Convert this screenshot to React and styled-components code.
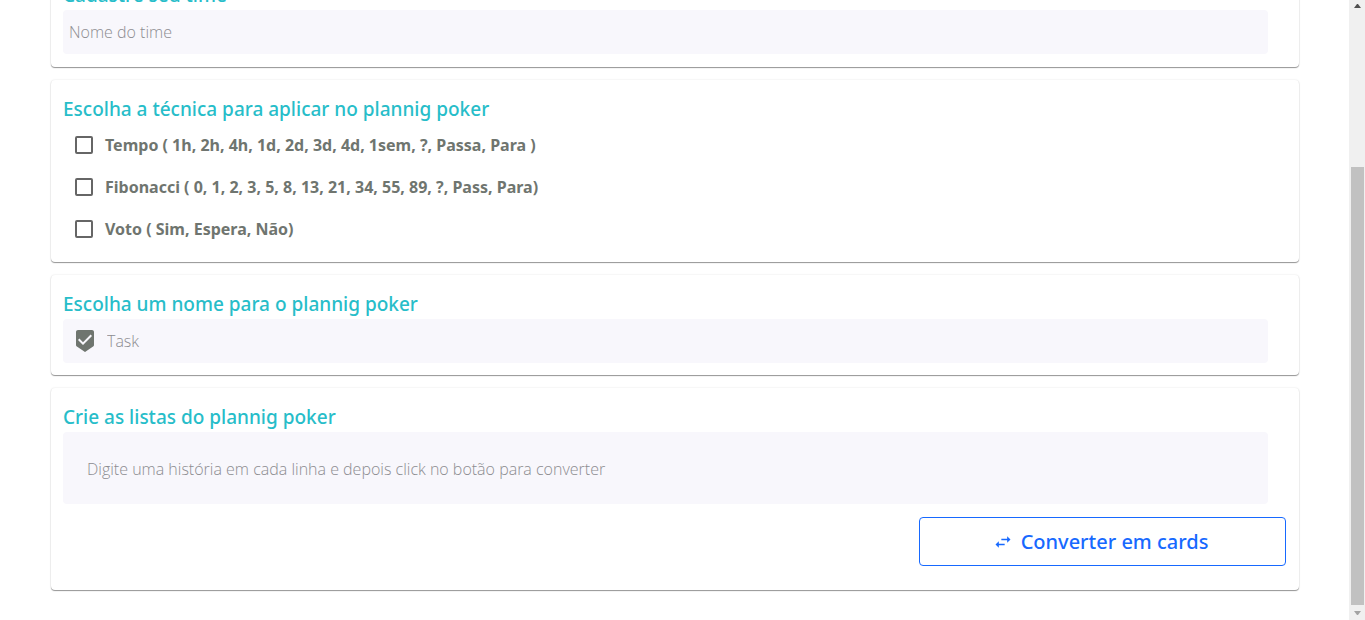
import React from "react";
import styled, { createGlobalStyle } from "styled-components";

const GlobalStyle = createGlobalStyle`
  *, *::before, *::after { box-sizing: border-box; }
  body { margin: 0; background: #fff; font-family: "Noto Sans", "Open Sans", sans-serif; }
`;

const Viewport = styled.div`
  display: flex;
  height: 100vh;
  overflow: hidden;
`;

const Content = styled.main`
  flex: 1;
  min-width: 0;
  display: flex;
  flex-direction: column;
  justify-content: flex-end;
  gap: 13px;
  padding: 0 50px 30px 51px;
`;

const Card = styled.section`
  flex: none;
  display: flex;
  flex-direction: column;
  padding: 14px 13px ${(p) => p.$bottom ?? 12}px 12px;
  border-radius: 4px;
  background: #fff;
  box-shadow: 0 1px 1px rgba(0, 0, 0, 0.4), 0 0 2px rgba(0, 0, 0, 0.12);
`;

const Title = styled.h2`
  margin: 0;
  font-size: 19px;
  font-weight: 500;
  line-height: 30px;
  color: #27bdc9;
`;

const Field = styled.label`
  display: flex;
  align-items: center;
  gap: 10px;
  height: 44px;
  margin-right: 18px;
  padding: 0 ${(p) => (p.$icon ? 10 : 6)}px;
  border-radius: 4px;
  background: #f8f7fc;
  color: #6f756f;
`;

const TextInput = styled.input`
  flex: 1;
  min-width: 0;
  padding: 0;
  border: 0;
  outline: 0;
  background: transparent;
  font: 300 16px/24px "Open Sans", "Noto Sans", sans-serif;
  color: #333;
  &::placeholder { color: #8c8c90; opacity: 1; }
`;

const StoryInput = styled.textarea`
  display: block;
  height: 72px;
  margin: 0 18px 13px 0;
  padding: 25px 24px 23px;
  border: 0;
  border-radius: 4px;
  outline: 0;
  resize: none;
  overflow: hidden;
  background: #f8f7fc;
  font: 300 16px/24px "Open Sans", "Noto Sans", sans-serif;
  color: #333;
  &::placeholder { color: #8c8c90; opacity: 1; }
`;

const Option = styled.label`
  display: flex;
  align-items: center;
  height: 42px;
  font-size: 16px;
  font-weight: 700;
  color: #6f756f;
`;

const Checkbox = styled.input`
  appearance: none;
  width: 18px;
  height: 18px;
  margin: 0 12px;
  border: 2px solid #666;
  border-radius: 2px;
  &:checked { background: #666; }
`;

const ConvertButton = styled.button`
  align-self: flex-end;
  display: flex;
  align-items: center;
  justify-content: center;
  gap: 8px;
  width: 30%;
  height: 49px;
  padding: 0 16px 0 12px;
  border: 1px solid #1769ff;
  border-radius: 4px;
  background: #fff;
  color: #1769ff;
  font: 500 20px/32px "Noto Sans", "Open Sans", sans-serif;
`;

const Icon = styled.svg`
  flex: none;
  width: ${(p) => p.$size}px;
  height: ${(p) => p.$size}px;
  fill: currentColor;
`;

const ScrollTrack = styled.aside`
  flex: none;
  display: flex;
  flex-direction: column;
  align-items: center;
  width: 16px;
  background: #f0f0f0;
`;

const ScrollArrow = styled.svg`
  flex: none;
  width: 7px;
  height: 4px;
  margin: ${(p) => (p.$down ? "6px 0 5px" : "4px 0 9px")};
  fill: ${(p) => (p.$down ? "#a3a3a3" : "#505050")};
`;

const ScrollRail = styled.div`
  flex: 1;
  display: flex;
  flex-direction: column;
  justify-content: flex-end;
`;

const ScrollThumb = styled.div`
  width: 13px;
  height: 74.5%;
  background: #c1c1c1;
`;

const techniques = [
  "Tempo ( 1h, 2h, 4h, 1d, 2d, 3d, 4d, 1sem, ?, Passa, Para )",
  "Fibonacci ( 0, 1, 2, 3, 5, 8, 13, 21, 34, 55, 89, ?, Pass, Para)",
  "Voto ( Sim, Espera, Não)",
];

export default function App() {
  return (
    <>
      <GlobalStyle />
      <Viewport>
        <Content>
          <Card $bottom={13}>
            <Title>Cadastre seu time</Title>
            <Field>
              <TextInput aria-label="Nome do time" placeholder="Nome do time" />
            </Field>
          </Card>
          <Card>
            <Title>Escolha a técnica para aplicar no plannig poker</Title>
            {techniques.map((name) => (
              <Option key={name}>
                <Checkbox type="checkbox" />
                {name}
              </Option>
            ))}
          </Card>
          <Card>
            <Title>Escolha um nome para o plannig poker</Title>
            <Field $icon>
              <Icon $size={24} viewBox="0 0 24 24" aria-hidden="true">
                <path d="M19 1H5c-1.100 0-1.990.9-1.990 2L3 15.930c0 .69.350 1.300.880 1.660L12 23l8.110-5.410c.530-.360.880-.970.880-1.660L21 3c0-1.100-.9-2-2-2zm-9 15l-5-5 1.410-1.410L10 13.170l7.590-7.590L19 7l-9 9z" />
              </Icon>
              <TextInput aria-label="Task" placeholder="Task" />
            </Field>
          </Card>
          <Card $bottom={24}>
            <Title>Crie as listas do plannig poker</Title>
            <StoryInput
              aria-label="Histórias"
              placeholder="Digite uma história em cada linha e depois click no botão para converter"
            />
            <ConvertButton type="button">
              <Icon $size={20} viewBox="0 0 24 24" aria-hidden="true">
                <path d="M6.990 11L3 15l3.990 4v-3H14v-2H6.990v-3zM21 9l-3.990-4v3H10v2h7.010v3L21 9z" />
              </Icon>
              Converter em cards
            </ConvertButton>
          </Card>
        </Content>
        <ScrollTrack aria-hidden="true">
          <ScrollArrow viewBox="0 0 7 4"><path d="M0 4h7L4 0H3z" /></ScrollArrow>
          <ScrollRail><ScrollThumb /></ScrollRail>
          <ScrollArrow $down viewBox="0 0 7 4"><path d="M0 0h7L4 4H3z" /></ScrollArrow>
        </ScrollTrack>
      </Viewport>
    </>
  );
}
